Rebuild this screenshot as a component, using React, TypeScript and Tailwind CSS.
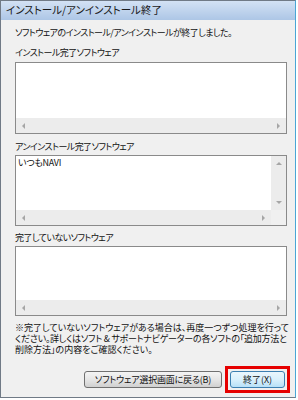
import React from 'react';

const jp = "font-['Noto_Sans_CJK_JP','Noto_Sans',sans-serif] [font-feature-settings:'palt']";

const Arrow = ({ dir }: { dir: 'l' | 'r' | 'u' | 'd' }) => {
  const pts = {
    l: '4,0 4,6 1,3',
    r: '1,0 1,6 4,3',
    u: '0,4 6,4 3,1',
    d: '0,1 6,1 3,4',
  }[dir];
  const size = dir === 'l' || dir === 'r' ? 'w-[5px] h-[6px]' : 'w-[6px] h-[5px]';
  const box = dir === 'l' || dir === 'r' ? '0 0 5 6' : '0 0 6 5';
  return (
    <svg viewBox={box} className={size}>
      <polygon points={pts} fill="#a6a6a6" />
    </svg>
  );
};

// horizontal scrollbar strip at the bottom of a list box
const HScroll = ({ corner }: { corner?: boolean }) => (
  <div className="flex h-[15px] shrink-0">
    <div className="flex-1 flex items-center justify-between px-[5px] bg-[#ececec]">
      <Arrow dir="l" />
      <Arrow dir="r" />
    </div>
    {corner && <div className="w-[15px] bg-[#f0f0f0]" />}
  </div>
);

const ListBox = ({ h, children, vscroll }: { h: string; children?: React.ReactNode; vscroll?: boolean }) => (
  <div className={`w-[272px] ${h} border border-[#8a8a8a] bg-white flex flex-col`}>
    <div className="flex-1 flex min-h-0">
      <div className={`flex-1 pl-[2px] pt-[1px] text-[9px] leading-[12px] tracking-[-0.3px] text-[#111] ${jp}`}>{children}</div>
      {vscroll && (
        <div className="w-[15px] bg-[#ececec] flex flex-col items-center justify-between py-[5px]">
          <Arrow dir="u" />
          <Arrow dir="d" />
        </div>
      )}
    </div>
    <HScroll corner={vscroll} />
  </div>
);

const Label = ({ children, className = '' }: { children: React.ReactNode; className?: string }) => (
  <div className={`text-[9px] leading-[12px] tracking-[-0.55px] whitespace-nowrap text-[#111] ${jp} ${className}`}>{children}</div>
);

export default function App() {
  return (
    <div className="w-[298px] h-[400px] bg-white overflow-hidden">
      <div className="w-[296px] h-[398px] border border-[#707a86] border-r-[#4aa6d6] bg-[#f0f0f0] flex flex-col">
        {/* title bar */}
        <div className="h-[19px] shrink-0 bg-gradient-to-b from-[#d3e2f4] to-[#adc6e6] flex items-center pl-[5px]">
          <span className={`text-[10.5px] leading-none text-[#1a1a1a] ${jp}`}>インストール/アンインストール終了</span>
        </div>

        <div className="flex flex-col pl-[14px]">
          <Label className="mt-[7px]">ソフトウェアのインストール/アンインストールが終了しました。</Label>
          <Label className="mt-[8px]">インストール完了ソフトウェア</Label>
          <div className="mt-[3px]">
            <ListBox h="h-[72px]" />
          </div>

          <Label className="mt-[7px]">アンインストール完了ソフトウェア</Label>
          <div className="mt-[2px]">
            <ListBox h="h-[71px]" vscroll>
              いつもNAVI
            </ListBox>
          </div>

          <Label className="mt-[6px]">完了していないソフトウェア</Label>
          <div className="mt-[2px]">
            <ListBox h="h-[70px]" />
          </div>

          <div className={`mt-[6px] text-[9px] leading-[11px] whitespace-nowrap text-[#111] ${jp}`}>
            <div>※完了していないソフトウェアがある場合は、再度一つずつ処理を行って</div>
            <div className="tracking-[-0.25px]">ください。詳しくはソフト &amp; サポートナビゲーターの各ソフトの「追加方法と</div>
            <div>削除方法」の内容をご確認ください。</div>
          </div>
        </div>

        {/* buttons */}
        <div className="mt-auto mb-[4px] flex items-center justify-end gap-[3px] pr-[5px]">
          <button className={`w-[138px] h-[17px] rounded-[3px] border border-[#707070] bg-gradient-to-b from-[#f4f4f4] via-[#e6e6e6] to-[#d0d0d0] text-[9px] leading-none tracking-[-0.2px] text-[#111] ${jp}`}>
            ソフトウェア選択画面に戻る(B)
          </button>
          <div className="border-[3px] border-[#e60000] p-[2px]">
            <button className={`w-[55px] h-[17px] rounded-[3px] border border-[#3c7fb1] bg-gradient-to-b from-[#eaf6fd] via-[#d9f0fc] to-[#b7e0f7] text-[9px] leading-none text-[#111] ${jp} block`}>
              終了(X)
            </button>
          </div>
        </div>
      </div>
    </div>
  );
}
